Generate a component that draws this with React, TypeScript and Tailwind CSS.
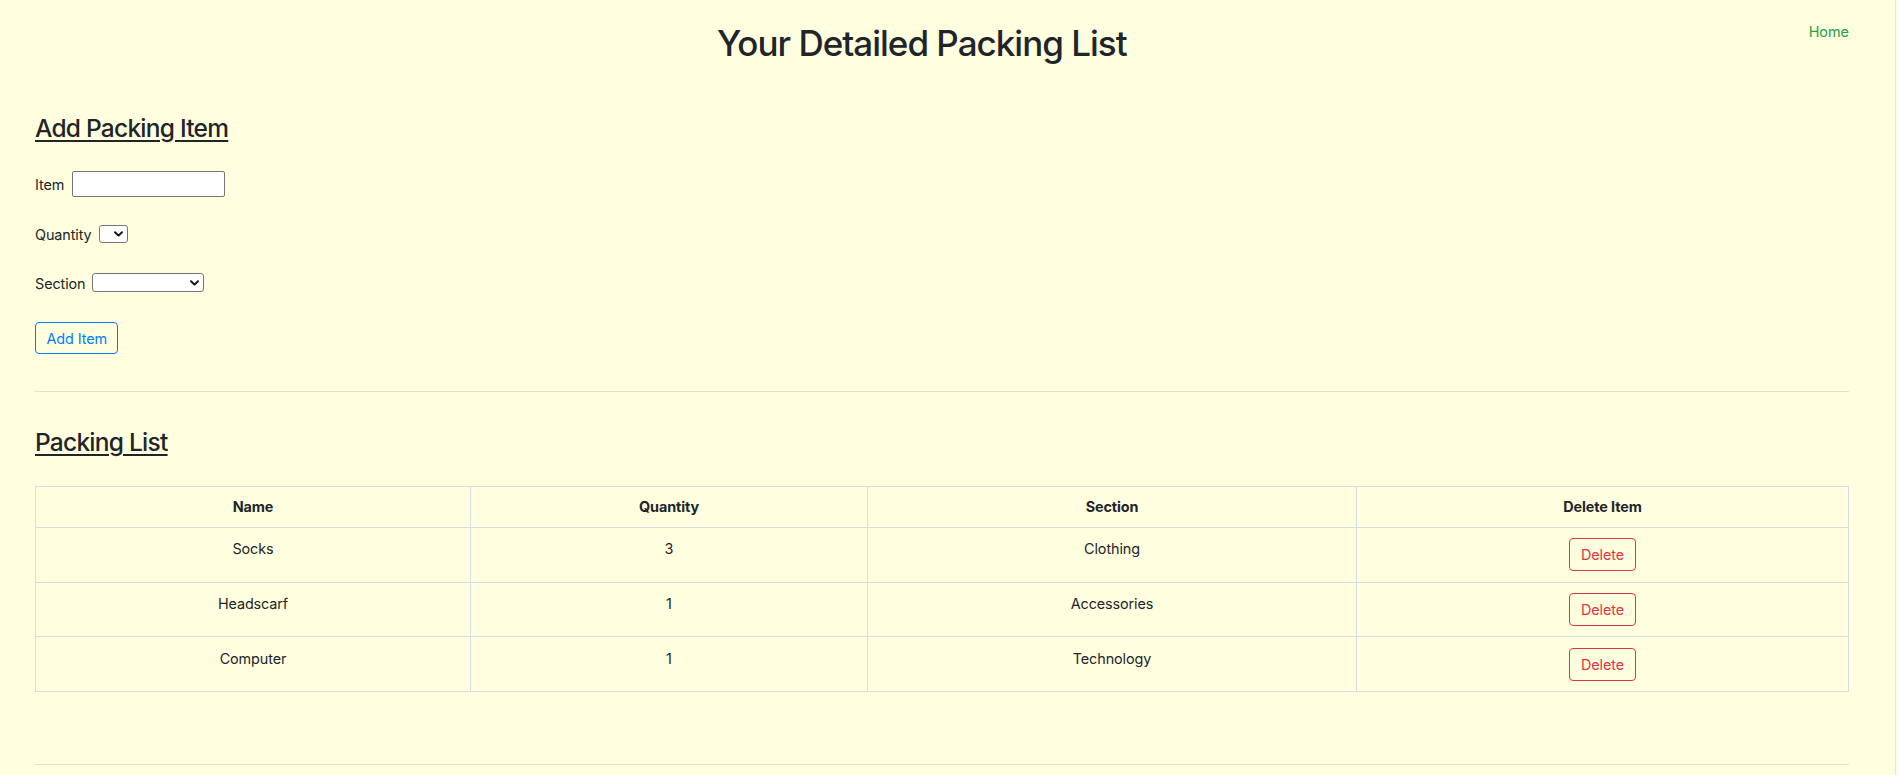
import React from "react";

const rows = [
  { name: "Socks", qty: 3, section: "Clothing" },
  { name: "Headscarf", qty: 1, section: "Accessories" },
  { name: "Computer", qty: 1, section: "Technology" },
];

function Chevron() {
  return (
    <svg
      className="pointer-events-none absolute right-[5px] top-1/2 -translate-y-1/2"
      width="9"
      height="6"
      viewBox="0 0 9 6"
      fill="none"
    >
      <path d="M1 1.2 L4.5 4.6 L8 1.2" stroke="#111" strokeWidth="1.9" strokeLinecap="round" strokeLinejoin="round" />
    </svg>
  );
}

export default function App() {
  return (
    <div className="flex min-h-screen bg-[#ffffe0] font-['Inter',sans-serif] text-[#212529]">
      <div className="flex-1 pl-[35px] pr-[46px]">
        <header className="flex">
          <h1 className="flex-1 pt-[22px] text-center text-[35px] font-medium leading-[1.2] tracking-[-1px]">
            Your Detailed Packing List
          </h1>
          <a href="#" className="pt-[21px] text-[14.4px] leading-[21.6px] text-[#22a043]">
            Home
          </a>
        </header>

        <section className="mt-[49px]">
          <h3 className="text-[24.5px] font-medium leading-[30.24px] tracking-[-0.75px] underline decoration-2 underline-offset-[3px]">
            Add Packing Item
          </h3>
          <form className="flex flex-col text-[14.4px] leading-[21.6px] tracking-[-0.1px]" onSubmit={(e) => e.preventDefault()}>
            <div className="mt-[28px] flex h-[26px] items-center">
              <label className="mr-[8px] mt-[2px]">Item</label>
              <input
                type="text"
                className="h-[26px] w-[153px] rounded-[2px] border border-[#767676] bg-white px-1 text-[13px] outline-none"
              />
            </div>
            <div className="mt-[23.5px] flex h-[26px] items-center">
              <label className="mr-[7px] mt-[2px]">Quantity</label>
              <span className="relative inline-flex">
                <select className="h-[18px] w-[29px] appearance-none rounded-[3px] border border-[#767676] bg-white text-[12px] outline-none" />
                <Chevron />
              </span>
            </div>
            <div className="mt-[23px] flex h-[26px] items-center">
              <label className="mr-[7px] mt-[2px]">Section</label>
              <span className="relative inline-flex">
                <select className="h-[19px] w-[112px] appearance-none rounded-[3px] border border-[#767676] bg-white text-[12px] outline-none" />
                <Chevron />
              </span>
            </div>
            <div className="mt-[26.7px]">
              <button
                type="submit"
                className="h-[32px] rounded-[4px] border border-[#007bff] px-[10.5px] text-[14.4px] leading-[21.6px] text-[#007bff]"
              >
                Add Item
              </button>
            </div>
          </form>
        </section>

        <hr className="mt-[37px] border-0 border-t border-[#e4e4c9]" />

        <section className="mt-[35px]">
          <h3 className="text-[24.5px] font-medium leading-[30.24px] tracking-[-0.75px] underline decoration-2 underline-offset-[3px]">
            Packing List
          </h3>
          <table className="mt-[28px] w-full table-fixed border-collapse text-center text-[14.4px] leading-[21.6px] tracking-[-0.1px]">
            <colgroup>
              <col className="w-[435px]" />
              <col className="w-[397px]" />
              <col className="w-[489px]" />
              <col />
            </colgroup>
            <thead>
              <tr>
                <th className="border border-[#dadde0] py-[9.2px] font-bold">Name</th>
                <th className="border border-[#dadde0] py-[9.2px] font-bold">Quantity</th>
                <th className="border border-[#dadde0] py-[9.2px] font-bold">Section</th>
                <th className="border border-[#dadde0] py-[9.2px] font-bold">Delete Item</th>
              </tr>
            </thead>
            <tbody>
              {rows.map((r) => (
                <tr key={r.name}>
                  <td className="border border-[#dadde0] pt-[10.5px] pb-[10.4px] align-top">{r.name}</td>
                  <td className="border border-[#dadde0] pt-[10.5px] pb-[10.4px] align-top">{r.qty}</td>
                  <td className="border border-[#dadde0] pt-[10.5px] pb-[10.4px] align-top">{r.section}</td>
                  <td className="border border-[#dadde0] pt-[10.5px] pb-[10.4px] align-top">
                    <button
                      type="button"
                      className="h-[33px] rounded-[4px] border border-[#dc3545] px-[10.5px] text-[14.4px] leading-[21.6px] text-[#dc3545]"
                    >
                      Delete
                    </button>
                  </td>
                </tr>
              ))}
            </tbody>
          </table>
        </section>

        <hr className="mt-[72px] border-0 border-t border-[#e4e4c9]" />
      </div>
      <div className="w-[4px] border-l border-[#e6e6d6] bg-[#fafaf0]" />
    </div>
  );
}
